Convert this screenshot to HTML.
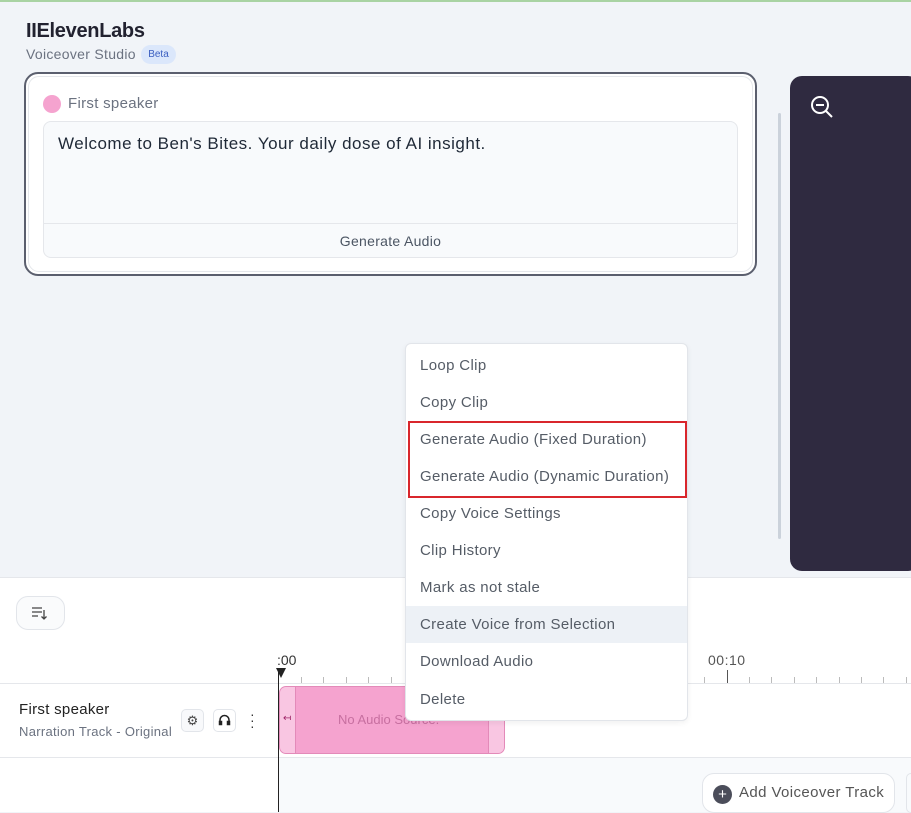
<!DOCTYPE html>
<html><head><style>
*{margin:0;padding:0;box-sizing:border-box}
body{width:911px;height:812px;overflow:hidden;background:#f1f4f8;font-family:"Liberation Sans",sans-serif;position:relative;color:#1f2937}
.abs{position:absolute}
.menu div.it{position:absolute;left:0;width:281px;height:37px;line-height:37px;padding-left:14px;font-size:15px;letter-spacing:0.35px;color:#555c66}
</style></head><body>
<div class="abs" style="left:0;top:0;width:911px;height:2px;background:#a9d3a3"></div>
<div class="abs" style="left:26px;top:20px;font-size:20px;font-weight:bold;color:#222230;letter-spacing:-0.3px">IIElevenLabs</div>
<div class="abs" style="left:26px;top:46px;font-size:14px;color:#6b7280;letter-spacing:0.3px">Voiceover Studio</div>
<div class="abs" style="left:141px;top:45px;width:35px;height:19px;border-radius:10px;background:#dbe7fb;color:#3b5fc0;font-size:10px;text-align:center;line-height:19px">Beta</div>
<div class="abs" style="left:24px;top:72px;width:733px;height:204px;border:2px solid #5b5f6e;border-radius:14px;background:#fff"></div>
<div class="abs" style="left:28px;top:76px;width:725px;height:196px;border:1px solid #e5e7eb;border-radius:11px"></div>
<div class="abs" style="left:43px;top:95px;width:18px;height:18px;border-radius:50%;background:#f5a3cf"></div>
<div class="abs" style="left:68px;top:95px;font-size:15px;color:#6b7280;letter-spacing:0.3px">First speaker</div>
<div class="abs" style="left:43px;top:121px;width:695px;height:137px;border:1px solid #e5e7eb;border-radius:8px;background:#f8fafc"></div>
<div class="abs" style="left:43px;top:223px;width:695px;height:1px;background:#e5e7eb"></div>
<div class="abs" style="left:58px;top:134px;font-size:17px;color:#1f2937;letter-spacing:0.5px">Welcome to Ben's Bites. Your daily dose of AI insight.</div>
<div class="abs" style="left:43px;top:233px;width:695px;text-align:center;font-size:14px;color:#4b5563;letter-spacing:0.3px">Generate Audio</div>
<div class="abs" style="left:778px;top:113px;width:3px;height:426px;background:#cbd2db;border-radius:2px"></div>
<div class="abs" style="left:790px;top:76px;width:130px;height:495px;background:#2f2a40;border-radius:12px"></div>
<svg class="abs" style="left:810px;top:95px" width="24" height="24" viewBox="0 0 24 24" fill="none" stroke="#fff" stroke-width="2"><circle cx="10" cy="10" r="8"/><path d="M6 10h8M16 16l6 6"/></svg>
<div class="abs" style="left:0;top:577px;width:911px;height:235px;background:#fff;border-top:1px solid #e5e7eb"></div>
<div class="abs" style="left:16px;top:596px;width:49px;height:34px;border:1px solid #e2e5ea;border-radius:12px;background:#fafbfc"></div>
<svg class="abs" style="left:31px;top:605px" width="18" height="16" viewBox="0 0 18 16" fill="none" stroke="#444" stroke-width="1.3"><path d="M1 3h10M1 7h10M1 11h6M13 5v9M10.5 11.5l2.5 2.5 2.5-2.5"/></svg>
<div class="abs" style="left:277px;top:652px;font-size:14px;color:#333">:00</div>
<div class="abs" style="left:708px;top:652px;font-size:14px;color:#555;letter-spacing:0.5px">00:10</div>
<div class="abs" style="left:0;top:683px;width:911px;height:1px;background:#e5e7eb"></div>
<div class="abs" style="left:0;top:757px;width:911px;height:1px;background:#e5e7eb"></div>
<div class="abs" style="left:278px;top:758px;width:633px;height:54px;background:#f8fafc"></div>
<div class="abs" style="left:727px;top:670px;width:1px;height:13px;background:#555"></div>
<div id="ticks"></div>
<div class="abs" style="left:278px;top:670px;width:1px;height:142px;background:#222"></div>
<div class="abs" style="left:276px;top:668px;width:0;height:0;border-left:5px solid transparent;border-right:5px solid transparent;border-top:10px solid #222"></div>
<div class="abs" style="left:19px;top:701px;font-size:15px;color:#222;letter-spacing:0.3px">First speaker</div>
<div class="abs" style="left:19px;top:724px;font-size:13px;color:#6b7280;letter-spacing:0.3px">Narration Track - Original</div>
<div class="abs" style="left:181px;top:709px;width:23px;height:23px;border:1px solid #e2e5ea;border-radius:5px;background:#f8f9fb;text-align:center;line-height:21px;font-size:13px;color:#444">⚙</div>
<div class="abs" style="left:213px;top:709px;width:23px;height:23px;border:1px solid #e2e5ea;border-radius:5px;background:#fff"></div>
<svg class="abs" style="left:218px;top:714px" width="13" height="12" viewBox="0 0 13 12" fill="none" stroke="#222" stroke-width="1.5"><path d="M2 10V6a4.5 4.5 0 0 1 9 0v4"/><rect x="1.5" y="7.5" width="2" height="3" fill="#222"/><rect x="9.5" y="7.5" width="2" height="3" fill="#222"/></svg>
<div class="abs" style="left:250px;top:711px;font-size:14px;color:#333;line-height:6px">·<br>·<br>·</div>
<div class="abs" style="left:279px;top:686px;width:226px;height:68px;background:#f5a3cf;border:1px solid #e38ab9;border-radius:7px"></div>
<div class="abs" style="left:280px;top:687px;width:16px;height:66px;background:#f9c6e2;border-right:1px solid #e38ab9;border-radius:6px 0 0 6px"></div>
<div class="abs" style="left:488px;top:687px;width:16px;height:66px;background:#f9c6e2;border-left:1px solid #e38ab9;border-radius:0 6px 6px 0"></div>
<div class="abs" style="left:283px;top:713px;font-size:10px;color:#a0286a">↤</div>
<div class="abs" style="left:338px;top:712px;font-size:13px;color:#c76fa0">No Audio Source.</div>
<div class="abs" style="left:702px;top:773px;width:193px;height:40px;border:1px solid #e2e5ea;border-radius:12px;background:#fff"></div>
<div class="abs" style="left:713px;top:785px;width:19px;height:19px;border-radius:50%;background:#4b4d5a;color:#fff;text-align:center;font-size:15px;line-height:19px">+</div>
<div class="abs" style="left:739px;top:784px;font-size:15px;color:#555;letter-spacing:0.4px">Add Voiceover Track</div>
<div class="abs" style="left:906px;top:773px;width:10px;height:40px;border:1px solid #e2e5ea;border-radius:10px"></div>
<div class="abs menu" style="left:405px;top:343px;width:283px;height:378px;background:#fff;border:1px solid #e2e5ea;border-radius:6px;box-shadow:0 2px 6px rgba(0,0,0,.06)">
<div class="it" style="top:3px">Loop Clip</div>
<div class="it" style="top:40px">Copy Clip</div>
<div class="it" style="top:77px">Generate Audio (Fixed Duration)</div>
<div class="it" style="top:114px">Generate Audio (Dynamic Duration)</div>
<div class="it" style="top:151px">Copy Voice Settings</div>
<div class="it" style="top:188px">Clip History</div>
<div class="it" style="top:225px">Mark as not stale</div>
<div class="it" style="top:262px;background:#edf1f6">Create Voice from Selection</div>
<div class="it" style="top:299px">Download Audio</div>
<div class="it" style="top:337px">Delete</div>
</div>
<div class="abs" style="left:408px;top:421px;width:279px;height:77px;border:2px solid #d9262c"></div>
<script>
var t=document.getElementById('ticks'),h='';
for(var x=301;x<911;x+=22.4){if(Math.abs(x-728)<5)continue;h+='<div class="abs" style="left:'+Math.round(x)+'px;top:677px;width:1px;height:6px;background:#bbb"></div>';}
t.innerHTML=h;
</script>
</body></html>
